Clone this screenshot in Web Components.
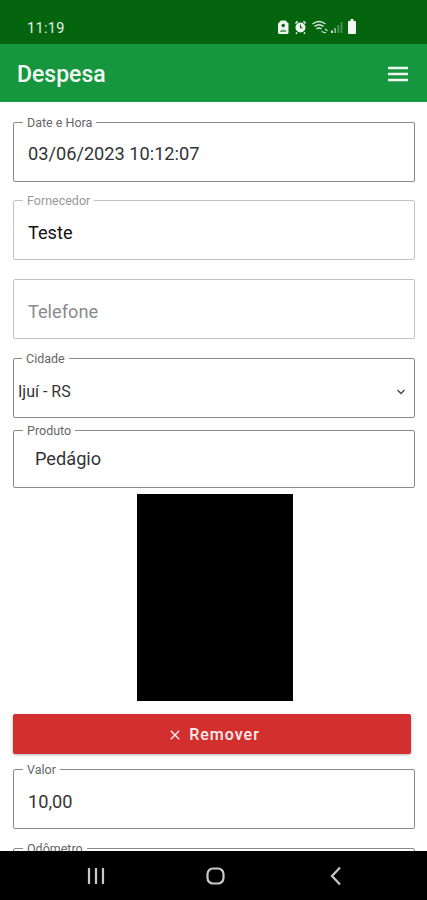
<!DOCTYPE html>
<html lang="pt">
<head>
<meta charset="utf-8">
<title>Despesa</title>
<style>
  html, body { margin: 0; padding: 0; background: #fff; }
  body { width: 427px; height: 900px; overflow: hidden; font-family: Roboto, "Liberation Sans", sans-serif; }
</style>
</head>
<body>
<app-screen>
  <status-bar slot="top" time="11:19"></status-bar>
  <app-bar slot="top" title="Despesa"></app-bar>

  <form-field label="Date e Hora" value="03/06/2023 10:12:07" strong style="--gap:18px;--pt:2px"></form-field>
  <form-field label="Fornecedor" value="Teste" style="--gap:19px;--value:#111"></form-field>
  <form-field placeholder="Telefone" style="--gap:19px"></form-field>
  <form-field label="Cidade" value="Ijuí - RS" select strong style="--gap:12px;--pt:7px"></form-field>
  <form-field label="Produto" value="Pedágio" strong style="--h:58px;--pad:21px;--gap:6px;--pt:0px;--pb:2px"></form-field>
  <photo-box></photo-box>
  <remove-button>Remover</remove-button>
  <form-field label="Valor" value="10,00" strong style="--gap:19px"></form-field>
  <form-field label="Odômetro" strong></form-field>

  <nav-bar slot="bottom"></nav-bar>
</app-screen>

<script>
class AppScreen extends HTMLElement {
  constructor() {
    super();
    this.attachShadow({ mode: "open" });
    this.shadowRoot.innerHTML = `
      <style>
        :host { display: flex; flex-direction: column; width: 427px; height: 900px; overflow: hidden; background: #fff; }
        main { flex: 1; min-height: 0; overflow: hidden; padding: 20px 12px 0 13px; }
      </style>
      <slot name="top"></slot>
      <main><slot></slot></main>
      <slot name="bottom"></slot>
    `;
  }
}

class StatusBar extends HTMLElement {
  constructor() {
    super();
    this.attachShadow({ mode: "open" });
  }
  connectedCallback() {
    this.shadowRoot.innerHTML = `
      <style>
        :host { display: flex; align-items: center; justify-content: space-between; height: 44px; padding: 10px 68px 0 27px; box-sizing: border-box; background: #05650f; color: #e6f0e6; }
        span { font-size: 14.5px; letter-spacing: .3px; position: relative; top: 1px; }
        svg { display: block; }
      </style>
      <span>${this.getAttribute("time") ?? ""}</span>
      <svg width="81" height="18" viewBox="0 0 81 18">
        <!-- lock -->
        <path d="M3 2.500h4.500L10.500 5.500V14.500a1.500 1.500 0 0 1-1.500 1.500H1.500A1.500 1.500 0 0 1 0 14.500V5.500z" fill="#eef5ee"/>
        <circle cx="5.200" cy="7.500" r="1.700" fill="#05650f"/>
        <path d="M2 13q3.200-3 6.400 0v1H2z" fill="#6d9f72"/>
        <!-- alarm -->
        <circle cx="22.500" cy="9.500" r="5" fill="#eef5ee"/>
        <path d="M17.500 5.500l2-2.200M27.500 5.500l-2-2.200M19 14.500l-1 1.300M26 14.500l1 1.300" stroke="#eef5ee" stroke-width="1.600"/>
        <path d="M22.500 6.800v3h2" fill="none" stroke="#05650f" stroke-width="1.100"/>
        <!-- wifi -->
        <path d="M34.500 6q6.500-5 13 0M36.500 8.500q4.500-3.500 9 0M38.500 11q2.500-2 5 0" fill="none" stroke="#dbe9dc" stroke-width="1.300"/>
        <path d="M43.500 13.500l4.500 1.500M47 11l2.500 1.800" stroke="#dbe9dc" stroke-width="1.200"/>
        <!-- signal -->
        <rect x="53" y="12.500" width="1.800" height="2.500" fill="#dbe9dc"/>
        <rect x="56.200" y="10" width="1.800" height="5" fill="#8db592"/>
        <rect x="59.400" y="7" width="1.800" height="8" fill="#4f9158"/>
        <rect x="62.600" y="4" width="1.800" height="11" fill="#4f9158"/>
        <!-- battery -->
        <path d="M70 4q0-1 1-1h1.500V1h3v2H77q1 0 1 1v11q0 1-1 1h-6q-1 0-1-1z" fill="#f3f8f3"/>
      </svg>
    `;
  }
}

class AppBar extends HTMLElement {
  constructor() {
    super();
    this.attachShadow({ mode: "open" });
  }
  connectedCallback() {
    this.shadowRoot.innerHTML = `
      <style>
        :host { display: flex; align-items: center; justify-content: space-between; height: 58px; padding: 3px 19px 0 17px; box-sizing: border-box; background: #16963f; border-bottom: 1px solid #1c9c46; color: #f2faf4; }
        h1 { margin: 0; font-size: 23px; font-weight: 500; }
        svg { display: block; }
      </style>
      <h1>${this.getAttribute("title") ?? ""}</h1>
      <svg width="20" height="16" viewBox="0 0 20 16">
        <path d="M0 2h20M0 8h20M0 14h20" stroke="#eef8f0" stroke-width="2.600"/>
      </svg>
    `;
  }
}

class FormField extends HTMLElement {
  constructor() {
    super();
    this.attachShadow({ mode: "open" });
  }
  connectedCallback() {
    const label = this.getAttribute("label");
    const value = this.getAttribute("value") ?? "";
    const placeholder = this.getAttribute("placeholder");
    const isSelect = this.hasAttribute("select");
    const strong = this.hasAttribute("strong");

    this.shadowRoot.innerHTML = `
      <style>
        :host { display: block; position: relative; margin-bottom: var(--gap, 0); }
        .box {
          height: var(--h, 60px);
          box-sizing: border-box;
          border: 1.5px solid ${strong ? "#8b8b8b" : "#c2c2c2"};
          border-radius: 2px;
          display: flex;
          align-items: center;
          justify-content: space-between;
          padding: var(--pt, 5px) 8px var(--pb, 0) var(--pad, ${isSelect ? "4px" : "14px"});
          font-size: ${isSelect ? "16px" : "18.2px"};
          color: var(--value, #333);
        }
        .ph { color: #8a8a8a; }
        label {
          position: absolute;
          top: -6px;
          left: ${isSelect ? "9px" : "10px"};
          padding: 0 4px;
          background: #fff;
          font-size: 12.5px;
          line-height: 14px;
          color: ${strong ? "#666" : "#999"};
        }
        svg { display: block; }
      </style>
      ${label ? `<label>${label}</label>` : ""}
      <div class="box">
        ${placeholder ? `<span class="ph">${placeholder}</span>` : `<span>${value}</span>`}
        ${isSelect ? `<svg width="10" height="6" viewBox="0 0 10 6"><path d="M1.500 1l3.500 3.500L8.500 1" fill="none" stroke="#444" stroke-width="1.300"/></svg>` : ""}
      </div>
    `;
  }
}

class PhotoBox extends HTMLElement {
  constructor() {
    super();
    this.attachShadow({ mode: "open" });
    this.shadowRoot.innerHTML = `
      <style>
        :host { display: block; margin-bottom: 13px; }
        div { width: 156px; height: 207px; margin-left: 124px; background: #000; }
      </style>
      <div></div>
    `;
  }
}

class RemoveButton extends HTMLElement {
  constructor() {
    super();
    this.attachShadow({ mode: "open" });
    this.shadowRoot.innerHTML = `
      <style>
        :host { display: block; margin: 0 4px 15px 0; }
        button {
          width: 100%;
          height: 40px;
          display: flex;
          align-items: center;
          justify-content: center;
          gap: 9px;
          border: 0;
          border-radius: 2px;
          background: #d32f2f;
          box-shadow: 0 1px 3px rgba(0, 0, 0, .3);
          color: #fbeeee;
          font: 500 16px Roboto, "Liberation Sans", sans-serif;
          letter-spacing: 1px;
          padding: 1px 0 0 6px;
        }
        svg { display: block; }
      </style>
      <button type="button">
        <svg width="10" height="10" viewBox="0 0 10 10"><path d="M.8.8l8.400 8.400M9.200.8L.8 9.200" stroke="#fbeeee" stroke-width="1.400"/></svg>
        <slot></slot>
      </button>
    `;
  }
}

class NavBar extends HTMLElement {
  constructor() {
    super();
    this.attachShadow({ mode: "open" });
    this.shadowRoot.innerHTML = `
      <style>
        :host { display: flex; align-items: center; height: 49px; padding-left: 87px; box-sizing: border-box; background: #000; }
        svg { display: block; }
        .home { margin-left: 101px; }
        .back { margin-left: 104px; }
      </style>
      <svg width="18" height="18" viewBox="0 0 18 18"><path d="M2 1v16M9 1v16M16 1v16" stroke="#c9c9c9" stroke-width="2.200"/></svg>
      <svg class="home" width="20" height="18" viewBox="0 0 20 18"><rect x="1.500" y="1.500" width="16" height="15" rx="5.500" fill="none" stroke="#c9c9c9" stroke-width="2.200"/></svg>
      <svg class="back" width="12" height="20" viewBox="0 0 12 20"><path d="M10 1.500L2 10l8 8.500" fill="none" stroke="#c9c9c9" stroke-width="2.200"/></svg>
    `;
  }
}

customElements.define("app-screen", AppScreen);
customElements.define("status-bar", StatusBar);
customElements.define("app-bar", AppBar);
customElements.define("form-field", FormField);
customElements.define("photo-box", PhotoBox);
customElements.define("remove-button", RemoveButton);
customElements.define("nav-bar", NavBar);
</script>
</body>
</html>
